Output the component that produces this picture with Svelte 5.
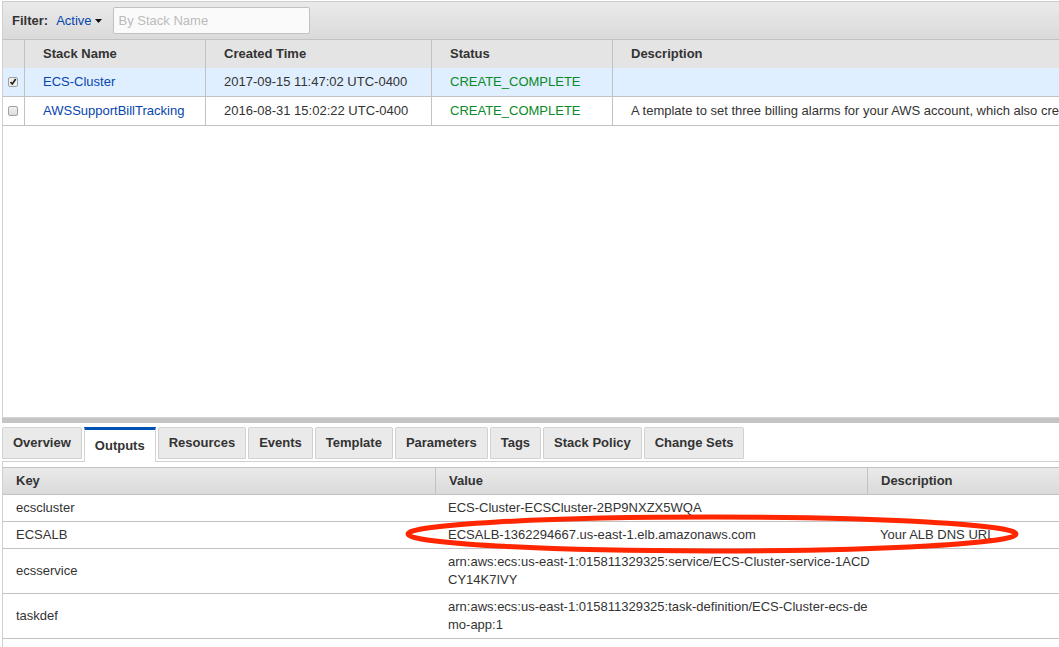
<script>
  let stacks = $state([
    { name: 'ECS-Cluster', created: '2017-09-15 11:47:02 UTC-0400', status: 'CREATE_COMPLETE', description: '', selected: true },
    { name: 'AWSSupportBillTracking', created: '2016-08-31 15:02:22 UTC-0400', status: 'CREATE_COMPLETE', description: 'A template to set three billing alarms for your AWS account, which also creates', selected: false },
  ]);

  const tabs = ['Overview', 'Outputs', 'Resources', 'Events', 'Template', 'Parameters', 'Tags', 'Stack Policy', 'Change Sets'];
  let active = $state('Outputs');
  let query = $state('');

  // Long ARNs carry their own line break.
  const outputs = [
    { key: 'ecscluster', value: 'ECS-Cluster-ECSCluster-2BP9NXZX5WQA', description: '' },
    { key: 'ECSALB', value: 'ECSALB-1362294667.us-east-1.elb.amazonaws.com', description: 'Your ALB DNS URL', marked: true },
    { key: 'ecsservice', value: 'arn:aws:ecs:us-east-1:015811329325:service/ECS-Cluster-service-1ACD\nCY14K7IVY', description: '' },
    { key: 'taskdef', value: 'arn:aws:ecs:us-east-1:015811329325:task-definition/ECS-Cluster-ecs-de\nmo-app:1', description: '' },
  ];
</script>

<div class="page">
  <section class="list">
    <div class="filter">
      <span class="label">Filter:</span>
      <button class="menu" type="button">
        Active
        <svg width="7" height="4" viewBox="0 0 7 4" aria-hidden="true"><path d="M0 0h7L3.500 4z" fill="#111" /></svg>
      </button>
      <input class="search" type="text" placeholder="By Stack Name" aria-label="By Stack Name" bind:value={query} />
    </div>
    <table class="stacks">
      <colgroup>
        <col class="c-check" /><col class="c-name" /><col class="c-created" /><col class="c-status" /><col />
      </colgroup>
      <thead>
        <tr><th></th><th>Stack Name</th><th>Created Time</th><th>Status</th><th>Description</th></tr>
      </thead>
      <tbody>
        {#each stacks as stack}
          <tr class:selected={stack.selected}>
            <td><input type="checkbox" aria-label={stack.name} bind:checked={stack.selected} /></td>
            <td><a href="#stack">{stack.name}</a></td>
            <td>{stack.created}</td>
            <td class="ok">{stack.status}</td>
            <td>{stack.description}</td>
          </tr>
        {/each}
      </tbody>
    </table>
  </section>

  <div class="splitter"></div>

  <section class="detail">
    <div class="tabs" role="tablist">
      {#each tabs as tab}
        <button type="button" role="tab" class:active={tab === active} aria-selected={tab === active} onclick={() => (active = tab)}>{tab}</button>
      {/each}
    </div>
    <div class="panel">
      <table class="outputs">
        <colgroup><col class="c-key" /><col class="c-value" /><col /></colgroup>
        <thead>
          <tr><th>Key</th><th>Value</th><th>Description</th></tr>
        </thead>
        <tbody>
          {#each outputs as row}
            <tr>
              <td>{row.key}</td>
              <td class:anchor={row.marked}>
                <div class="value">{row.value}</div>
                {#if row.marked}
                  <svg class="mark" width="616" height="42" viewBox="0 0 616 42" aria-hidden="true">
                    <ellipse cx="308" cy="21" rx="304" ry="17" fill="none" stroke="#ff2600" stroke-width="5" />
                  </svg>
                {/if}
              </td>
              <td>{row.description}</td>
            </tr>
          {/each}
        </tbody>
      </table>
    </div>
  </section>
</div>

<style>
  :global(body) {
    margin: 0;
    background: #fff;
  }
  .page {
    box-sizing: border-box;
    display: flex;
    flex-direction: column;
    min-height: 100vh;
    padding: 1px 0 0 2px;
    overflow: hidden;
    font-family: 'Liberation Sans', Arial, sans-serif;
    font-size: 13px;
    line-height: 18px;
    color: #333;
  }
  button,
  input {
    font: inherit;
  }
  .list {
    flex: 1;
    border-top: 1px solid #ccc;
    border-left: 1px solid #d0d0d0;
  }
  .filter {
    display: flex;
    align-items: center;
    height: 37px;
    padding-left: 9px;
    border-bottom: 1px solid #c2c2c2;
    background: linear-gradient(#eaeaea, #dadada);
  }
  .label {
    font-weight: bold;
  }
  .menu {
    display: flex;
    align-items: center;
    gap: 3px;
    margin: 0 11px 0 8px;
    padding: 0;
    border: 0;
    background: none;
    color: #0645ad;
  }
  .search {
    box-sizing: border-box;
    width: 197px;
    height: 27px;
    padding: 0 5px;
    border: 1px solid #c2c2c2;
    border-radius: 2px;
    background: #fafafa;
    color: #333;
  }
  .search::placeholder {
    color: #bbb;
    opacity: 1;
  }
  table {
    width: 100%;
    table-layout: fixed;
    border-collapse: separate;
    border-spacing: 0;
  }
  th,
  td {
    box-sizing: border-box;
    text-align: left;
  }
  .c-check { width: 22px; }
  .c-name { width: 181px; }
  .c-created { width: 226px; }
  .c-status { width: 181px; }
  .stacks th,
  .stacks td {
    padding: 5px 0 5px 18px;
    white-space: nowrap;
    overflow: hidden;
    border-right: 1px solid #c2c2c2;
  }
  .stacks th {
    background: #e4e4e4;
  }
  .stacks td {
    border-bottom: 1px solid #c2c2c2;
  }
  .stacks th:last-child,
  .stacks td:last-child {
    border-right: 0;
  }
  .stacks th:first-child,
  .stacks td:first-child {
    padding: 0 0 0 5px;
  }
  .stacks .selected td {
    background: #e0efff;
  }
  a {
    color: #0645ad;
    text-decoration: none;
  }
  .stacks .ok {
    color: #0a8a28;
  }
  input[type='checkbox'] {
    appearance: none;
    display: block;
    box-sizing: border-box;
    width: 10px;
    height: 10px;
    margin: 0;
    border: 1px solid #a0a0a0;
    border-radius: 2px;
    background: linear-gradient(#f0f0f0, #dcdcdc);
  }
  input[type='checkbox']:checked {
    background: url("data:image/svg+xml,%3Csvg xmlns='http://www.w3.org/2000/svg' viewBox='0 0 8 8'%3E%3Cpath d='M1.500 4.200 3.300 6 6.700 1' fill='none' stroke='%23222' stroke-width='1.700'/%3E%3C/svg%3E") center / 8px 8px no-repeat, #eee;
  }
  .splitter {
    height: 5px;
    border-top: 1px solid #d4d4d4;
    background: #c4c4c4;
  }
  .detail {
    padding-top: 4px;
  }
  .tabs {
    display: flex;
    align-items: flex-start;
    gap: 2px;
    border-bottom: 1px solid #d0d0d0;
  }
  .tabs button {
    box-sizing: border-box;
    height: 32px;
    margin-bottom: 2px;
    padding: 0 10px;
    border: 1px solid #d2d2d2;
    border-radius: 2px 2px 0 0;
    background: #eaeaea;
    color: #333;
    font-weight: bold;
    white-space: nowrap;
  }
  .tabs .active {
    height: 35px;
    margin-bottom: -1px;
    padding-bottom: 1px;
    border-top: 3px solid #0052b4;
    border-bottom: 0;
    border-radius: 0;
    background: #fff;
  }
  .panel {
    padding: 5px 0 8px;
    border-left: 1px solid #d0d0d0;
  }
  .c-key { width: 433px; }
  .c-value { width: 432px; }
  .outputs th,
  .outputs td {
    padding: 4px 0 4px 13px;
    border-bottom: 1px solid #c2c2c2;
  }
  .outputs td:nth-child(2),
  .outputs td:nth-child(3) {
    padding-left: 12px;
  }
  .outputs th {
    border-top: 1px solid #c2c2c2;
    border-right: 1px solid #c2c2c2;
    background: linear-gradient(#eaeaea, #dadada);
  }
  .outputs th:last-child {
    border-right: 0;
  }
  .value {
    white-space: pre;
  }
  .anchor {
    position: relative;
  }
  .mark {
    position: absolute;
    left: -32px;
    top: -9px;
    pointer-events: none;
  }
</style>
